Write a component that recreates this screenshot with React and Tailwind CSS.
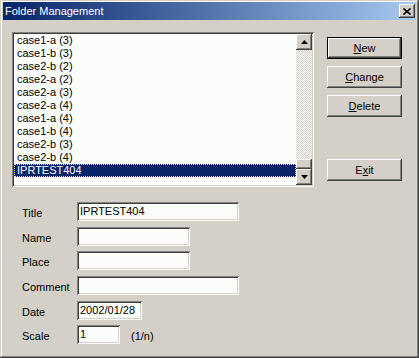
const sunken =
  'shadow-[inset_1px_1px_#808080,inset_-1px_-1px_#ffffff,inset_2px_2px_#404040,inset_-2px_-2px_#d4d0c8]'
const raised =
  'shadow-[inset_-1px_-1px_#404040,inset_1px_1px_#ffffff,inset_-2px_-2px_#808080,inset_2px_2px_#d4d0c8]'
const dither =
  'bg-[conic-gradient(#ffffff_25%,#d4d0c8_0_50%,#ffffff_0_75%,#d4d0c8_0)] bg-[length:2px_2px]'

const ITEMS = [
  'case1-a (3)',
  'case1-b (3)',
  'case2-b (2)',
  'case2-a (2)',
  'case2-a (3)',
  'case2-a (4)',
  'case1-a (4)',
  'case1-b (4)',
  'case2-b (3)',
  'case2-b (4)',
  'IPRTEST404',
]

function Arrow({ up }) {
  return (
    <div className={`w-[16px] h-[16px] bg-[#d4d0c8] ${raised} flex items-center justify-center`}>
      <svg width="7" height="4" viewBox="0 0 7 4">
        {up ? <path d="M3.5 0 L7 4 L0 4 Z" fill="#000" /> : <path d="M0 0 L7 0 L3.5 4 Z" fill="#000" />}
      </svg>
    </div>
  )
}

function Button({ children, primary = false, className = '' }) {
  return (
    <div
      className={`w-[75px] h-[22px] bg-[#d4d0c8] flex items-center justify-center text-black ${
        primary
          ? 'border border-black shadow-[inset_-1px_-1px_#404040,inset_1px_1px_#ffffff,inset_-2px_-2px_#808080]'
          : raised
      } ${className}`}
    >
      {children}
    </div>
  )
}

function Field({ label, value = '', width, className = '' }) {
  return (
    <div className={`flex items-center h-[19px] ${className}`}>
      <span className="w-[55px] pt-[4px] text-black">{label}</span>
      <div className={`h-[19px] bg-[#fafdfa] ${sunken} pl-[3px] leading-[19px] text-black`} style={{ width }}>
        {value}
      </div>
    </div>
  )
}

export default function App() {
  return (
    <div
      className="w-[419px] h-[358px] bg-[#d4d0c8] pt-[2px] px-[3px] text-[11px] shadow-[inset_-1px_-1px_#404040,inset_1px_1px_#d4d0c8,inset_-2px_-2px_#808080,inset_2px_2px_#ffffff]"
      style={{ fontFamily: '"Liberation Sans", Arial, sans-serif' }}
    >
      {/* title bar */}
      <div className="h-[18px] bg-linear-to-r from-[#0a246a] to-[#a6caf0] flex items-center justify-between pl-[2px] pr-[1px]">
        <span className="text-white text-[11px]">Folder Management</span>
        <div className={`w-[16px] h-[14px] bg-[#d4d0c8] ${raised} flex items-center justify-center`}>
          <svg width="8" height="7" viewBox="0 0 8 7">
            <path d="M0.5 0.5 L7.5 6.5 M7.5 0.5 L0.5 6.5" stroke="#000" strokeWidth="1.6" />
          </svg>
        </div>
      </div>

      <div className="flex pl-[9px] pt-[12px]">
        <div className="w-[302px]">
          {/* list box */}
          <div className={`h-[155px] bg-[#fafdfa] ${sunken} p-[2px] flex`}>
            <div className="flex-1 flex flex-col">
              {ITEMS.map((item, i) =>
                i === ITEMS.length - 1 ? (
                  <div
                    key={item}
                    className="h-[13px] leading-[11px] pl-[2px] bg-[#0a246a] text-white border border-dotted border-[#f5db95]"
                  >
                    {item}
                  </div>
                ) : (
                  <div key={item} className="h-[13px] leading-[13px] pl-[3px] text-black">
                    {item}
                  </div>
                )
              )}
            </div>
            <div className="w-[16px] flex flex-col">
              <Arrow up />
              <div className={`flex-1 flex flex-col justify-end ${dither}`}>
                <div className={`h-[10px] bg-[#d4d0c8] ${raised}`} />
              </div>
              <Arrow />
            </div>
          </div>

          {/* form */}
          <div className="pl-[10px] pt-[15px] flex flex-col">
            <Field label="Title" value="IPRTEST404" width={162} />
            <Field label="Name" width={113} className="mt-[6px]" />
            <Field label="Place" width={113} className="mt-[5px]" />
            <Field label="Comment" width={162} className="mt-[6px]" />
            <Field label="Date" value="2002/01/28" width={65} className="mt-[6px]" />
            <div className="flex items-center mt-[4px]">
              <Field label="Scale" value="1" width={43} />
              <span className="ml-[11px] pt-[4px] text-black">(1/n)</span>
            </div>
          </div>
        </div>

        {/* buttons */}
        <div className="ml-[13px] pt-[5px] flex flex-col">
          <Button primary>
            <span><u>N</u>ew</span>
          </Button>
          <Button className="mt-[7px]">
            <span><u>C</u>hange</span>
          </Button>
          <Button className="mt-[7px]">
            <span><u>D</u>elete</span>
          </Button>
          <Button className="mt-[42px]">
            <span>E<u>x</u>it</span>
          </Button>
        </div>
      </div>
    </div>
  )
}
